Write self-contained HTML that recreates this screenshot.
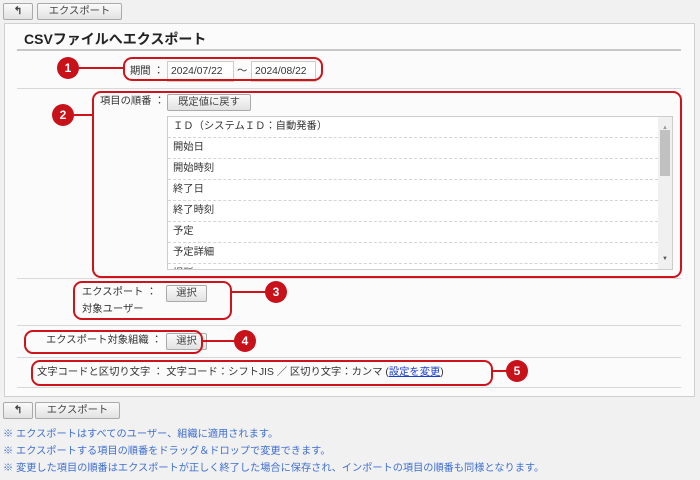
<!DOCTYPE html>
<html><head><meta charset="utf-8"><style>
*{box-sizing:border-box;margin:0;padding:0}
body{width:700px;height:480px;background:#f1f1f1;position:relative;overflow:hidden;font-family:"Liberation Sans","Noto Sans CJK JP",sans-serif;font-size:10.3px;color:#333;line-height:14px}
.a{position:absolute}
.btn{position:absolute;height:17px;border:1px solid #aaa;border-radius:2px;background:linear-gradient(#fafafa,#e2e2e2);font-size:10.3px;color:#444;text-align:center;line-height:15px}
.line{position:absolute;height:1px;background:#d8d8d8;left:17px;width:664px}
.rb{position:absolute;border:2px solid #d0121b;border-radius:9px}
.c{position:absolute;width:22px;height:22px;border-radius:50%;background:#c8121a;color:#fff;font-weight:bold;font-size:12px;text-align:center;line-height:22px}
.h{position:absolute;height:2px;background:#d0121b}
.inp{position:absolute;height:21px;border:1px solid #ccc;background:#fff;font-size:10.3px;line-height:19px;padding-left:3px}
.row{height:21px;border-bottom:1px dashed #d4d4d4;padding-left:5px;line-height:20px;font-size:10.3px}
.note{position:absolute;left:3px;color:#3f6fd1;font-size:10.2px}
</style></head><body>
<div class="btn" style="left:3px;top:3px;width:30px;font-weight:bold">&#x21B0;</div>
<div class="btn" style="left:37px;top:3px;width:85px">エクスポート</div>
<div class="a" style="left:4px;top:23px;width:691px;height:374px;background:#fbfbfb;border:1px solid #cfcfcf"></div>
<div class="a" style="left:24px;top:30px;font-size:14px;font-weight:bold;color:#222;line-height:18px">CSVファイルへエクスポート</div>
<div class="a" style="left:17px;top:49px;width:664px;height:2px;background:#c8c8c8"></div>
<div class="line" style="top:88px"></div>
<div class="line" style="top:278px"></div>
<div class="line" style="top:325px"></div>
<div class="line" style="top:357px"></div>
<div class="line" style="top:387px"></div>

<div class="a" style="left:130px;top:65px">期間 ：</div>
<div class="inp" style="left:167px;top:61px;width:67px">2024/07/22</div>
<div class="a" style="left:237px;top:65px">～</div>
<div class="inp" style="left:251px;top:61px;width:65px">2024/08/22</div>

<div class="a" style="left:100px;top:95px">項目の順番 ：</div>
<div class="btn" style="left:167px;top:94px;width:84px">既定値に戻す</div>
<div class="a" style="left:167px;top:116px;width:506px;height:154px;border:1px solid #ccc;background:#fff;overflow:hidden">
<div style="width:490px">
<div class="row">ＩＤ（システムＩＤ：自動発番）</div>
<div class="row">開始日</div>
<div class="row">開始時刻</div>
<div class="row">終了日</div>
<div class="row">終了時刻</div>
<div class="row">予定</div>
<div class="row">予定詳細</div>
<div class="row">場所</div>
</div>
<div class="a" style="right:0;top:0;width:14px;height:152px;background:#f0f0f0"></div>
<div class="a" style="right:2px;top:13px;width:10px;height:46px;background:#c1c1c1"></div>
<div class="a" style="right:4px;top:4px;font-size:6px;color:#999">▲</div>
<div class="a" style="right:4px;bottom:3px;font-size:6px;color:#555">▼</div>
</div>

<div class="a" style="left:82px;top:286px">エクスポート ：</div>
<div class="btn" style="left:166px;top:285px;width:41px">選択</div>
<div class="a" style="left:82px;top:303px">対象ユーザー</div>
<div class="a" style="left:46px;top:334px">エクスポート対象組織 ：</div>
<div class="btn" style="left:166px;top:333px;width:41px">選択</div>
<div class="a" style="left:37px;top:366px">文字コードと区切り文字 ： 文字コード：シフトJIS ／ 区切り文字：カンマ (<span style="color:#1a3ed0;text-decoration:underline">設定を変更</span>)</div>

<div class="rb" style="left:123px;top:57px;width:200px;height:24px"></div>
<div class="h" style="left:79px;top:67px;width:45px"></div><div class="c" style="left:57px;top:57px">1</div>
<div class="rb" style="left:92px;top:91px;width:590px;height:187px"></div>
<div class="h" style="left:74px;top:114px;width:19px"></div><div class="c" style="left:52px;top:104px">2</div>
<div class="rb" style="left:73px;top:281px;width:159px;height:39px"></div>
<div class="h" style="left:231px;top:291px;width:35px"></div><div class="c" style="left:265px;top:281px">3</div>
<div class="rb" style="left:24px;top:330px;width:179px;height:24px"></div>
<div class="h" style="left:202px;top:340px;width:33px"></div><div class="c" style="left:234px;top:330px">4</div>
<div class="rb" style="left:31px;top:360px;width:462px;height:26px"></div>
<div class="h" style="left:492px;top:370px;width:15px"></div><div class="c" style="left:506px;top:360px">5</div>

<div class="btn" style="left:3px;top:402px;width:30px;font-weight:bold">&#x21B0;</div>
<div class="btn" style="left:35px;top:402px;width:85px">エクスポート</div>
<div class="note" style="top:428px">※ エクスポートはすべてのユーザー、組織に適用されます。</div>
<div class="note" style="top:445px">※ エクスポートする項目の順番をドラッグ＆ドロップで変更できます。</div>
<div class="note" style="top:462px">※ 変更した項目の順番はエクスポートが正しく終了した場合に保存され、インポートの項目の順番も同様となります。</div>
</body></html>
